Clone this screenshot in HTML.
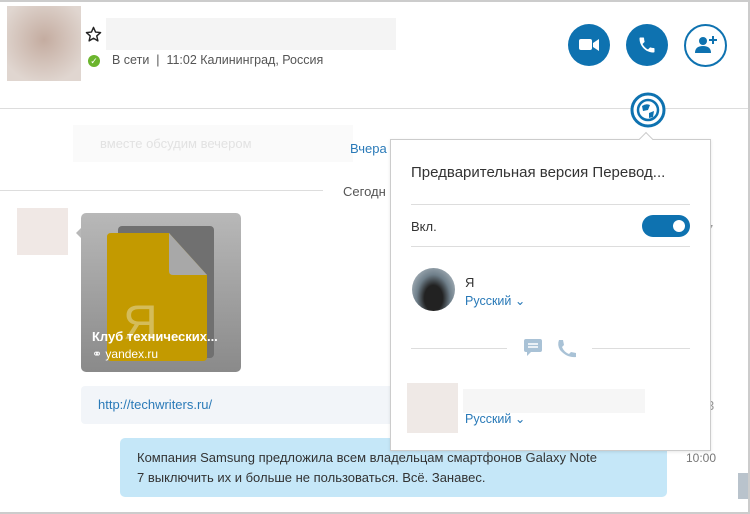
<!DOCTYPE html>
<html><head><meta charset="utf-8"><style>
*{margin:0;padding:0;box-sizing:border-box}
body{width:750px;height:514px;overflow:hidden;background:#fff;font-family:"Liberation Sans","DejaVu Sans",sans-serif;position:relative;color:#333}
.a{position:absolute}
.t{position:absolute;white-space:nowrap}
</style></head><body>
<div class="a" style="left:0;top:0;width:750px;height:2px;background:#ccc"></div>
<div class="a" style="right:0;top:0;width:2px;height:514px;background:#ccc"></div>
<div class="a" style="left:0;bottom:0;width:750px;height:2px;background:#ccc"></div>
<div class="a" style="left:738px;top:473px;width:10px;height:26px;background:#b9c3cc"></div>

<div class="a" style="left:7px;top:6px;width:74px;height:75px;background:radial-gradient(circle at 50% 45%,#c4aca0,#e0d6d0 80%)"></div>
<svg class="a" style="left:85px;top:26px" width="17" height="17" viewBox="0 0 24 24"><path d="M12 2 L14.9 8.6 22 9.3 16.6 14 18.2 21 12 17.3 5.8 21 7.4 14 2 9.3 9.1 8.6Z" fill="none" stroke="#222" stroke-width="2" stroke-linejoin="round"/></svg>
<div class="a" style="left:106px;top:18px;width:290px;height:32px;background:#f4f4f4"></div>
<div class="a" style="left:88px;top:55px;width:12px;height:12px;border-radius:50%;background:#6bb52d;color:#fff;font-size:9px;line-height:12px;text-align:center;font-weight:bold">✓</div>
<div class="t" style="left:112px;top:53px;font-size:12.5px;color:#555">В сети &nbsp;|&nbsp; 11:02 Калининград, Россия</div>

<div class="a" style="left:568px;top:24px;width:42px;height:42px;border-radius:50%;background:#0e72b0"></div>
<svg class="a" style="left:579px;top:37px" width="22" height="16"><rect x="0" y="2" width="13" height="11" rx="2" fill="#fff"/><path d="M14 6 L20 2 V14 L14 10Z" fill="#fff"/></svg>
<div class="a" style="left:626px;top:24px;width:42px;height:42px;border-radius:50%;background:#0e72b0"></div>
<svg class="a" style="left:637px;top:35px" width="20" height="20" viewBox="0 0 24 24"><path d="M6.6 10.8c1.4 2.8 3.8 5.1 6.6 6.6l2.2-2.2c.3-.3.7-.4 1-.2 1.1.4 2.300.6 3.6.6.6 0 1 .4 1 1V20c0 .6-.4 1-1 1C10.6 21 3 13.4 3 4c0-.6.4-1 1-1h3.5c.6 0 1 .4 1 1 0 1.300.2 2.500.6 3.6.1.3 0 .7-.2 1z" fill="#fff"/></svg>
<div class="a" style="left:684px;top:24px;width:43px;height:43px;border-radius:50%;border:2px solid #0e72b0"></div>
<svg class="a" style="left:693px;top:34px" width="26" height="22"><circle cx="10" cy="7" r="4" fill="#0e72b0"/><path d="M2 19 Q2 12 10 12 Q18 12 18 19Z" fill="#0e72b0"/><path d="M20 2v8M16 6h8" stroke="#0e72b0" stroke-width="2"/></svg>

<div class="a" style="left:0;top:108px;width:748px;height:1px;background:#ddd"></div>
<svg class="a" style="left:630px;top:92px" width="36" height="36"><circle cx="18" cy="18" r="16" fill="#fff" stroke="#0e72b0" stroke-width="3"/><circle cx="18" cy="18" r="10" fill="none" stroke="#0e72b0" stroke-width="2.5"/><path d="M12 14 Q16 11 20 13 L18 18 L13 19Z M19 21 L24 19 L23 25 L19 26Z" fill="#0e72b0"/></svg>

<div class="a" style="left:73px;top:125px;width:280px;height:37px;background:#fafafa"></div>
<div class="t" style="left:100px;top:136px;font-size:13px;color:#e2e2e2">вместе обсудим вечером</div>
<div class="t" style="left:350px;top:141px;font-size:13px;color:#2a7ab8">Вчера</div>
<div class="a" style="left:0;top:190px;width:323px;height:1px;background:#ddd"></div>
<div class="t" style="left:343px;top:184px;font-size:13px;color:#555">Сегодн</div>
<div class="t" style="left:706px;top:222px;font-size:13px;color:#999">7</div>

<div class="a" style="left:17px;top:208px;width:51px;height:47px;background:#f0e8e5"></div>
<div class="a" style="left:81px;top:213px;width:160px;height:159px;border-radius:5px;background:linear-gradient(#b8b8b8,#8a8a8a);overflow:hidden">
 <div class="a" style="left:37px;top:13px;width:96px;height:132px;background:#707070;border-radius:4px"></div>
 <svg class="a" style="left:26px;top:20px" width="102" height="128"><path d="M4 0 H62 L100 42 V124 Q100 128 96 128 H4 Q0 128 0 124 V4 Q0 0 4 0Z" fill="#c39a00"/><path d="M62 0 V38 Q62 42 66 42 H100Z" fill="#a8a8a8"/><text x="16" y="106" font-size="48" fill="#d4bc5a" font-family="Liberation Sans">Я</text></svg>
 <div class="t" style="left:11px;top:116px;font-size:13px;font-weight:bold;color:#fff">Клуб технических...</div>
 <div class="t" style="left:11px;top:134px;font-size:12px;color:#fff">⚭ yandex.ru</div>
</div>
<div class="a" style="left:76px;top:228px;width:0;height:0;border-top:5px solid transparent;border-bottom:5px solid transparent;border-right:5px solid #b8b8b8"></div>

<div class="a" style="left:81px;top:386px;width:320px;height:38px;background:#f2f5f9;border-radius:4px"></div>
<div class="t" style="left:98px;top:397px;font-size:13px;color:#2a7ab8">http://techwriters.ru/</div>
<div class="t" style="left:707px;top:398px;font-size:13px;color:#999">3</div>

<div class="a" style="left:120px;top:438px;width:547px;height:59px;background:#c5e7f8;border-radius:5px"></div>
<div class="t" style="left:137px;top:448px;font-size:13px;line-height:20px;color:#333">Компания Samsung предложила всем владельцам смартфонов Galaxy Note<br>7 выключить их и больше не пользоваться. Всё. Занавес.</div>
<div class="t" style="left:686px;top:451px;font-size:12px;color:#777">10:00</div>

<div class="a" style="left:390px;top:139px;width:321px;height:312px;background:#fff;border:1px solid #ccc;box-shadow:0 1px 3px rgba(0,0,0,.1)"></div>
<div class="a" style="left:641px;top:134px;width:10px;height:10px;background:#fff;border-left:1px solid #ccc;border-top:1px solid #ccc;transform:rotate(45deg)"></div>
<div class="t" style="left:411px;top:164px;font-size:15px;color:#333">Предварительная версия Перевод...</div>
<div class="a" style="left:411px;top:204px;width:279px;height:1px;background:#ddd"></div>
<div class="t" style="left:411px;top:219px;font-size:13px;color:#333">Вкл.</div>
<div class="a" style="left:642px;top:215px;width:48px;height:22px;border-radius:11px;background:#0e72b0"></div>
<div class="a" style="left:673px;top:220px;width:12px;height:12px;border-radius:50%;background:#fff"></div>
<div class="a" style="left:411px;top:246px;width:279px;height:1px;background:#ddd"></div>
<div class="a" style="left:412px;top:268px;width:43px;height:43px;border-radius:50%;background:radial-gradient(ellipse at 50% 70%,#222 30%,#6f7f8a 55%,#c8d0d6)"></div>
<div class="t" style="left:465px;top:275px;font-size:13px;color:#333">Я</div>
<div class="t" style="left:465px;top:293px;font-size:12.5px;color:#2a7ab8">Русский ⌄</div>
<div class="a" style="left:411px;top:348px;width:96px;height:1px;background:#ddd"></div>
<div class="a" style="left:592px;top:348px;width:98px;height:1px;background:#ddd"></div>
<svg class="a" style="left:522px;top:338px" width="60" height="22"><path d="M2 3 Q2 1 4 1 H18 Q20 1 20 3 V12 Q20 14 18 14 H9 L5 18 V14 H4 Q2 14 2 12Z" fill="#a9c2d6"/><path d="M6 6h10M6 9h10" stroke="#fff" stroke-width="1.5"/><path d="M37 2 L41 2 L42 7 L40 9 Q42 14 47 16 L49 14 L54 15 L54 19 Q45 20 38 12 Q35 7 37 2Z" fill="#a9c2d6"/></svg>
<div class="a" style="left:407px;top:383px;width:51px;height:50px;background:#efe9e6"></div>
<div class="a" style="left:463px;top:389px;width:182px;height:24px;background:#f6f6f6"></div>
<div class="t" style="left:465px;top:411px;font-size:12.5px;color:#2a7ab8">Русский ⌄</div>
</body></html>
